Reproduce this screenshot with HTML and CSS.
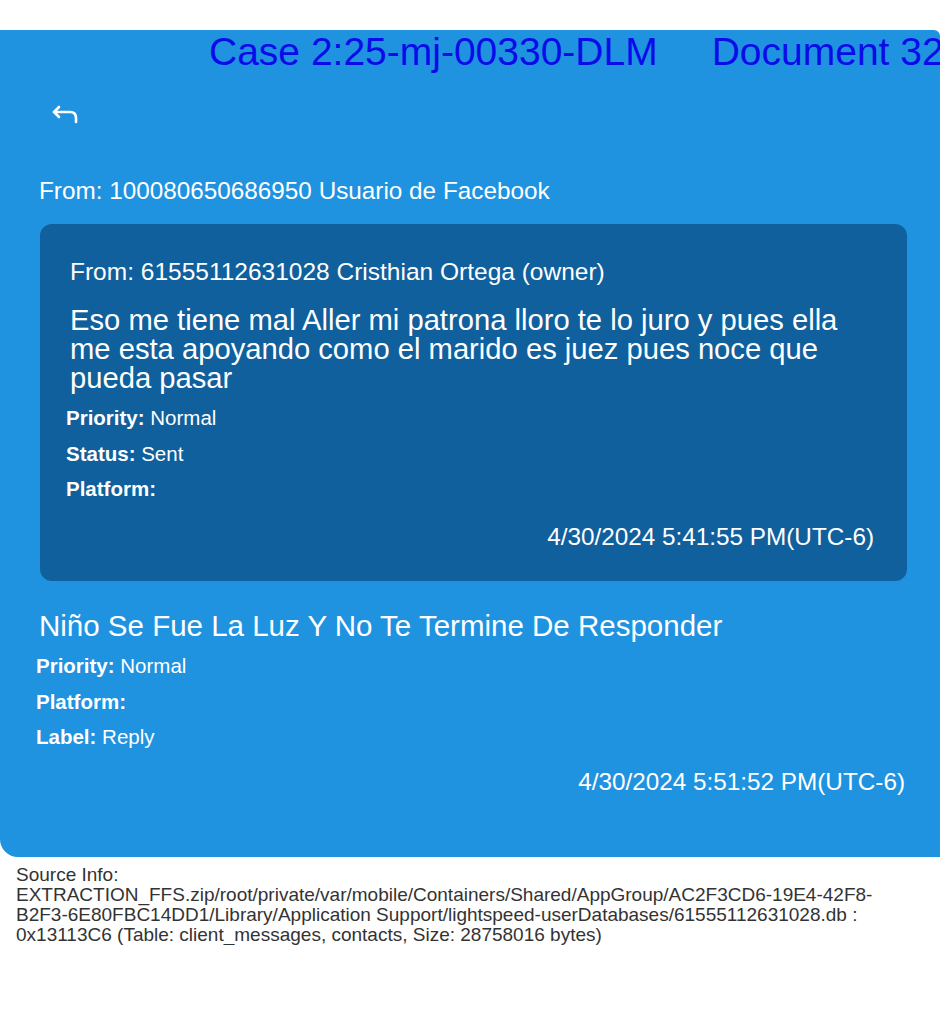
FILE: index.html
```html
<!DOCTYPE html>
<html lang="es">
<head>
<meta charset="utf-8">
<title>Message</title>
<link rel="stylesheet" href="styles.css">
</head>
<body>
<div class="card">
  <div class="header"><span>Case 2:25-mj-00330-DLM</span><span>Document 32</span></div>
  <div class="reply-icon">
    <svg width="28" height="22" viewBox="0 0 28 22" fill="none" stroke="#ffffff" stroke-width="2.6" stroke-linecap="round" stroke-linejoin="round">
      <path d="M8 4 L3 9 L8 14"/>
      <path d="M3 9 H19 Q25 9 25 15 V19"/>
    </svg>
  </div>
  <div class="from">From: 100080650686950 Usuario de Facebook</div>
  <div class="quoted">
    <div class="q-from">From: 61555112631028 Cristhian Ortega (owner)</div>
    <div class="q-body">Eso me tiene mal Aller mi patrona lloro te lo juro y pues ella me esta apoyando como el marido es juez pues noce que pueda pasar</div>
    <div class="meta">
      <div><b>Priority:</b> Normal</div>
      <div><b>Status:</b> Sent</div>
      <div><b>Platform:</b></div>
    </div>
    <div class="time">4/30/2024 5:41:55 PM(UTC-6)</div>
  </div>
  <div class="msg-title">Niño Se Fue La Luz Y No Te Termine De Responder</div>
  <div class="meta meta-outer">
    <div><b>Priority:</b> Normal</div>
    <div><b>Platform:</b></div>
    <div><b>Label:</b> Reply</div>
  </div>
  <div class="time time-outer">4/30/2024 5:51:52 PM(UTC-6)</div>
</div>
<div class="source">Source Info:<br>EXTRACTION_FFS.zip/root/private/var/mobile/Containers/Shared/AppGroup/AC2F3CD6-19E4-42F8-B2F3-6E80FBC14DD1/Library/Application Support/lightspeed-userDatabases/61555112631028.db : 0x13113C6 (Table: client_messages, contacts, Size: 28758016 bytes)</div>
</body>
</html>
```
FILE: styles.css
```css
html, body {
  margin: 0;
  padding: 0;
  background: #ffffff;
}
body {
  font-family: "Liberation Sans", Arial, sans-serif;
  width: 940px;
  overflow: hidden;
}
.card {
  margin-top: 30px;
  height: 827px;
  box-sizing: border-box;
  background: #1f92e0;
  border-radius: 0 6px 0 18px;
  color: #ffffff;
  overflow: hidden;
}
.header {
  display: flex;
  gap: 54px;
  padding-left: 209px;
  white-space: nowrap;
  font-size: 39px;
  line-height: 44px;
  color: #0b0bea;
}
.reply-icon {
  margin: 29px 0 0 51px;
  height: 22px;
}
.reply-icon svg {
  display: block;
}
.from {
  margin: 52px 0 0 39px;
  font-size: 24.3px;
  line-height: 28px;
}
.quoted {
  margin: 19px 33px 0 40px;
  height: 357px;
  box-sizing: border-box;
  padding: 34px 33px 0 26px;
  background: #0f609c;
  border-radius: 12px;
}
.q-from {
  padding-left: 4px;
  font-size: 24.5px;
  line-height: 28px;
}
.q-body {
  margin-top: 20px;
  padding-left: 4px;
  font-size: 29.2px;
  line-height: 29px;
}
.meta {
  margin-top: 7px;
  font-size: 20.5px;
  line-height: 35.5px;
}
.meta b {
  font-weight: bold;
}
.time {
  margin-top: 16px;
  text-align: right;
  font-size: 24.3px;
  line-height: 28px;
}
.msg-title {
  margin: 29px 0 0 39px;
  font-size: 29.5px;
  line-height: 32px;
}
.meta-outer {
  margin: 6px 0 0 36px;
}
.time-outer {
  margin-top: 13px;
  padding-right: 35px;
}
.source {
  margin: 8px 16px 0 16px;
  font-size: 19px;
  line-height: 20px;
  color: #333333;
}
```
